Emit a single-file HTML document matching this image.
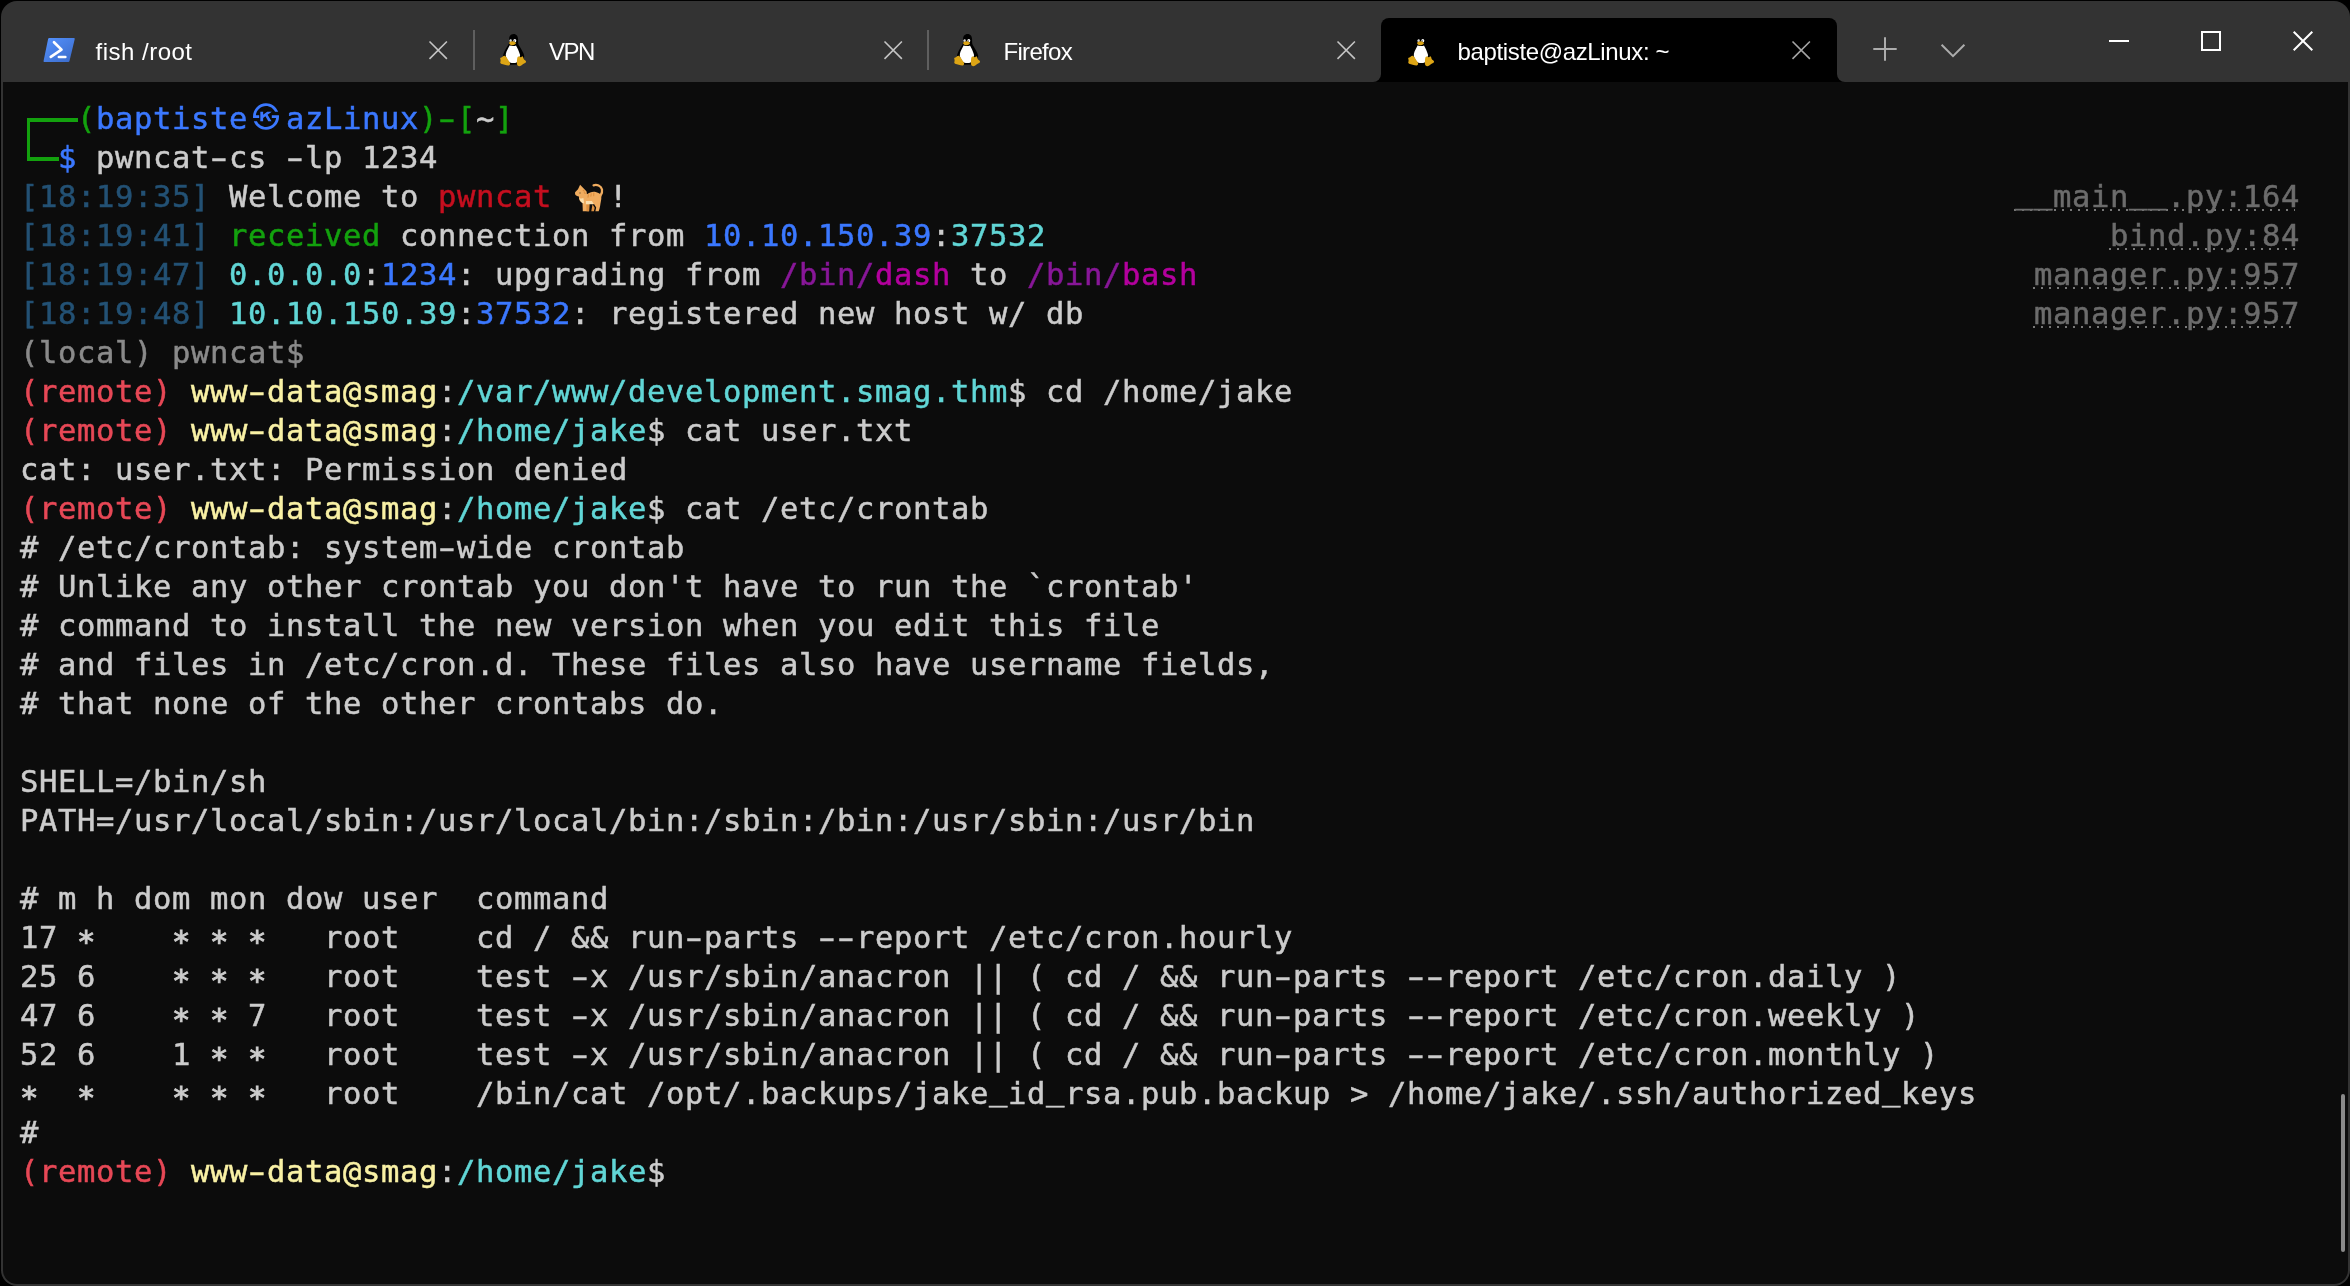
<!DOCTYPE html>
<html lang="en">
<head>
<meta charset="utf-8">
<title>baptiste@azLinux: ~</title>
<style>
*{box-sizing:border-box}
html,body{margin:0;padding:0;background:#000;width:2350px;height:1286px;overflow:hidden}
#win{position:absolute;left:1px;top:1px;width:2349px;height:1285px;background:#333;border-radius:16px;overflow:hidden}
#o{position:absolute;left:-1px;top:-1px;width:2350px;height:1286px}
#term{position:absolute;left:3px;top:82px;width:2345px;height:1202px;background:#0c0c0c;border-radius:0 0 14px 14px}
#tabs{will-change:transform;position:absolute;left:0;top:0;width:2350px;height:82px;font-family:"Liberation Sans","DejaVu Sans",sans-serif;font-size:24px;color:#fff}
.tt{position:absolute;top:37px;line-height:30px;height:30px;white-space:pre;color:#fff}
.sep{position:absolute;top:30px;width:2px;height:40px;background:#5f5f5f}
#atab{position:absolute;left:1381px;top:18px;width:456px;height:64px;background:#000;border-radius:8px 8px 0 0}
.fl{position:absolute;top:74px;width:8px;height:8px;overflow:hidden}
.fl i{position:absolute;width:16px;height:16px;border-radius:8px;box-shadow:0 0 0 8px #000}
svg{position:absolute;overflow:visible}
#scr{position:absolute;left:2341px;top:1094px;width:4px;height:158px;border-radius:2px;background:#8a8a8a}
#tx{will-change:transform;position:absolute;left:19.5px;top:99px;width:2280px;font-family:"DejaVu Sans Mono","Liberation Mono",monospace;font-size:30.5px;letter-spacing:0.6374px;color:#ccc;font-variant-ligatures:none;-webkit-text-stroke-width:0.5px}
#tx div{height:39px;line-height:39px;position:relative;white-space:pre}
.g{color:#13a10e}.bb{color:#3b78ff}.w{color:#ccc}.ts{color:#235174}.r{color:#c50f1f}
.bc{color:#61d6d6}.p{color:#881798}.m{color:#b4009e}.br{color:#e74856}.by{color:#f9f1a5}
.dm{color:#8a8a8a}
.cat{display:inline-block;width:38px;height:1px;position:relative;vertical-align:baseline}
.a{font-weight:inherit;position:relative;top:4px;-webkit-text-stroke-width:1px}
.h{font-weight:inherit;display:inline-block;transform:scaleX(1.6)}
.u{font-weight:inherit;position:relative;top:-4.5px}
.hid{color:transparent;-webkit-text-stroke-width:0}
.bx{position:absolute;background:#13a10e;z-index:2}
.k{display:inline-block;width:38px;height:39px;vertical-align:top;text-align:center;letter-spacing:0;font-family:"Noto Sans CJK KR","Noto Sans CJK JP","Noto Sans CJK SC",sans-serif;font-size:27.5px;line-height:39px;-webkit-text-stroke-width:0;position:relative;top:-3px;left:-1px}
.rt{position:absolute;top:0;right:0;height:39px;padding-left:1px;color:#6c6c6c;background:linear-gradient(#0c0c0c,#0c0c0c) right 32px/5px 2px no-repeat,linear-gradient(90deg,#787878 2px,transparent 2px) 0 32px/8px 2px repeat-x}
.rt u{text-decoration:none;border-bottom:0}
</style>
</head>
<body>
<div id="win"><div id="o">
<div id="term"></div>
<div id="tabs">
<svg style="left:43px;top:37px" width="33" height="26" viewBox="43 37 33 26"><defs><linearGradient id="psg" x1="0" y1="0" x2="1" y2="1"><stop offset="0" stop-color="#5593ff"/><stop offset="1" stop-color="#3a6ac8"/></linearGradient></defs><path d="M49.300 38h24.400a1 1 0 0 1 1 1.300l-5.200 21.700a1.300 1.300 0 0 1-1.200 1H44.600a1 1 0 0 1-1-1.300l4.500-21.700a1.300 1.300 0 0 1 1.200-1z" fill="url(#psg)"/><path d="M54 42.300l7.500 7.300-10.700 7.300" stroke="#fff" stroke-width="2.700" stroke-linecap="round" stroke-linejoin="round" fill="none"/><path d="M58.800 57.100h6.600" stroke="#fff" stroke-width="2.500" stroke-linecap="round" fill="none"/></svg>
<span class="tt" style="left:95.5px;letter-spacing:0.5px">fish /root</span>
<svg style="left:429.3px;top:40.9px" width="18.4" height="18.4" viewBox="0 0 18.4 18.4"><path d="M0.500 0.500L17.9 17.9M17.9 0.500L0.500 17.9" stroke="#c4c4c4" stroke-width="1.6" fill="none"/></svg>
<div class="sep" style="left:473px"></div>
<svg class="tux" style="left:499.9px;top:33.6px" width="26.2" height="32.4" viewBox="0 0 26.2 32.4"><path d="M13.6 0C10.6 0 9 2.4 9.1 5.4c.1 2.2.3 3.6-.9 5.6-1.5 2.4-3.6 5.6-4.6 8.6-.6 1.8-.9 3.6-.3 4.6l5 6.6 10.500-.2 4.800-6.400c1.200-1.400.500-3.300-.300-5.200-1.200-2.900-3-5.600-4.400-7.800-1-1.700-.7-3.600-.800-5.800C18 2.300 16.600 0 13.600 0z" fill="#000"/><path d="M9.800 11.200c-1.400 2.600-3.300 5.600-3.900 8.600-.5 2.600.7 5.200 2.300 7.200 1.400 1.700 3.500 2.200 5.500 2.100 2.100-.1 3.900-.8 4.700-2.900.5-1.400.6-3 1.600-3.600.4-.2.100-1.700-.300-2.900-.800-2.900-2.300-5.800-3.700-8.300-1 .9-4.900 1-6.200-.2z" fill="#fff"/><ellipse cx="10.700" cy="6.700" rx="1.300" ry="1.500" fill="#fff"/><ellipse cx="14.800" cy="6.700" rx="1.500" ry="1.600" fill="#fff"/><circle cx="11.100" cy="7" r=".6" fill="#000"/><circle cx="14.400" cy="7" r=".6" fill="#000"/><path d="M9.100 8.900c.2-.9 2.100-1.700 3.400-1.700 1.400 0 3.300 1 3.500 1.700.2.700-1.900 2.300-3.600 2.400-1.600.1-3.500-1.500-3.300-2.400z" fill="#dda515"/><path d="M.3 25c-.6-1.300.8-1.400 1.700-1.800.9-.5 1.300-1.700 2.600-1.500 1.300.2 2.200 2 3.100 3.500 1 1.700 2.700 3.300 2.400 4.700-.3 1.500-2 1.800-3.500 1.400-1.900-.5-3.900-1-5.500-1.600-1.500-.6-.5-1.900-.5-2.900 0-.7-.1-1.300-.300-1.800z" fill="#dda515"/><path d="M17.500 23.300c.5-1 1.300-.700 2.200-.600 1 .1 2.100-.600 2.900-.200.900.5.700 1.700 1.100 2.500.5 1 2.500 1.700 2.400 2.700-.1 1-1.700 1.400-2.900 2.200-1.300.9-2.600 2.400-4.200 2.300-1.500-.1-2.100-1.500-2.100-2.900 0-2 .1-4.700.600-6z" fill="#dda515"/><circle cx="20.800" cy="22.300" r="1" fill="#000"/></svg>
<span class="tt" style="left:549px;letter-spacing:-1.5px">VPN</span>
<svg style="left:883.5px;top:40.9px" width="18.4" height="18.4" viewBox="0 0 18.4 18.4"><path d="M0.500 0.500L17.9 17.9M17.9 0.500L0.500 17.9" stroke="#c4c4c4" stroke-width="1.6" fill="none"/></svg>
<div class="sep" style="left:927px"></div>
<svg class="tux" style="left:953.9px;top:33.6px" width="26.2" height="32.4" viewBox="0 0 26.2 32.4"><path d="M13.6 0C10.6 0 9 2.4 9.1 5.4c.1 2.2.3 3.6-.9 5.6-1.5 2.4-3.6 5.6-4.6 8.6-.6 1.8-.9 3.6-.3 4.6l5 6.6 10.500-.2 4.800-6.400c1.200-1.400.500-3.300-.300-5.200-1.200-2.900-3-5.600-4.400-7.800-1-1.700-.7-3.600-.800-5.800C18 2.300 16.600 0 13.600 0z" fill="#000"/><path d="M9.800 11.200c-1.400 2.600-3.300 5.600-3.900 8.600-.5 2.600.7 5.200 2.300 7.200 1.400 1.700 3.500 2.200 5.500 2.100 2.100-.1 3.900-.8 4.700-2.900.5-1.400.6-3 1.600-3.600.4-.2.100-1.700-.300-2.900-.800-2.900-2.300-5.800-3.700-8.300-1 .9-4.900 1-6.200-.2z" fill="#fff"/><ellipse cx="10.700" cy="6.700" rx="1.300" ry="1.500" fill="#fff"/><ellipse cx="14.800" cy="6.700" rx="1.500" ry="1.600" fill="#fff"/><circle cx="11.100" cy="7" r=".6" fill="#000"/><circle cx="14.400" cy="7" r=".6" fill="#000"/><path d="M9.100 8.900c.2-.9 2.100-1.700 3.400-1.700 1.400 0 3.300 1 3.500 1.700.2.700-1.900 2.300-3.600 2.400-1.600.1-3.500-1.500-3.300-2.400z" fill="#dda515"/><path d="M.3 25c-.6-1.300.8-1.400 1.700-1.800.9-.5 1.300-1.700 2.600-1.500 1.300.2 2.200 2 3.100 3.500 1 1.700 2.700 3.300 2.400 4.700-.3 1.500-2 1.800-3.500 1.400-1.900-.5-3.900-1-5.500-1.600-1.500-.6-.5-1.900-.5-2.900 0-.7-.1-1.300-.300-1.800z" fill="#dda515"/><path d="M17.500 23.300c.5-1 1.300-.700 2.200-.600 1 .1 2.100-.600 2.900-.200.900.5.700 1.700 1.100 2.500.5 1 2.500 1.700 2.400 2.700-.1 1-1.700 1.400-2.900 2.200-1.300.9-2.600 2.400-4.200 2.300-1.500-.1-2.100-1.500-2.100-2.900 0-2 .1-4.700.600-6z" fill="#dda515"/><circle cx="20.800" cy="22.300" r="1" fill="#000"/></svg>
<span class="tt" style="left:1003.5px;letter-spacing:-0.7px">Firefox</span>
<svg style="left:1337.3px;top:40.9px" width="18.4" height="18.4" viewBox="0 0 18.4 18.4"><path d="M0.500 0.500L17.9 17.9M17.9 0.500L0.500 17.9" stroke="#c4c4c4" stroke-width="1.6" fill="none"/></svg>
<div id="atab"></div>
<div class="fl" style="left:1373px"><i style="left:-8px;top:-8px"></i></div>
<div class="fl" style="left:1837px"><i style="left:0;top:-8px"></i></div>
<svg class="tux" style="left:1407.8px;top:33.6px" width="26.2" height="32.4" viewBox="0 0 26.2 32.4"><path d="M13.6 0C10.6 0 9 2.4 9.1 5.4c.1 2.2.3 3.6-.9 5.6-1.5 2.4-3.6 5.6-4.6 8.6-.6 1.8-.9 3.6-.3 4.6l5 6.6 10.500-.2 4.800-6.400c1.200-1.400.500-3.300-.300-5.200-1.200-2.900-3-5.600-4.400-7.800-1-1.700-.7-3.600-.800-5.800C18 2.300 16.600 0 13.600 0z" fill="#000"/><path d="M9.800 11.200c-1.400 2.600-3.300 5.600-3.900 8.600-.5 2.600.7 5.200 2.300 7.200 1.400 1.700 3.500 2.200 5.500 2.100 2.100-.1 3.900-.8 4.700-2.900.5-1.400.6-3 1.600-3.600.4-.2.100-1.700-.300-2.900-.800-2.900-2.300-5.800-3.700-8.300-1 .9-4.900 1-6.200-.2z" fill="#fff"/><ellipse cx="10.700" cy="6.700" rx="1.300" ry="1.500" fill="#fff"/><ellipse cx="14.800" cy="6.700" rx="1.500" ry="1.600" fill="#fff"/><circle cx="11.100" cy="7" r=".6" fill="#000"/><circle cx="14.400" cy="7" r=".6" fill="#000"/><path d="M9.100 8.900c.2-.9 2.100-1.700 3.400-1.700 1.400 0 3.300 1 3.500 1.700.2.700-1.900 2.300-3.600 2.400-1.600.1-3.500-1.500-3.300-2.400z" fill="#dda515"/><path d="M.3 25c-.6-1.300.8-1.400 1.700-1.800.9-.5 1.300-1.700 2.600-1.500 1.300.2 2.200 2 3.100 3.500 1 1.700 2.700 3.300 2.400 4.700-.3 1.500-2 1.800-3.500 1.400-1.900-.5-3.900-1-5.500-1.600-1.500-.6-.5-1.900-.5-2.900 0-.7-.1-1.300-.300-1.800z" fill="#dda515"/><path d="M17.500 23.300c.5-1 1.300-.700 2.200-.600 1 .1 2.100-.600 2.900-.200.900.5.700 1.700 1.100 2.500.5 1 2.500 1.700 2.400 2.700-.1 1-1.700 1.400-2.900 2.200-1.300.9-2.600 2.400-4.200 2.300-1.500-.1-2.100-1.500-2.100-2.900 0-2 .1-4.700.600-6z" fill="#dda515"/><circle cx="20.800" cy="22.300" r="1" fill="#000"/></svg>
<span class="tt" style="left:1457.5px;letter-spacing:-0.36px">baptiste@azLinux: ~</span>
<svg style="left:1791.6px;top:40.9px" width="18.4" height="18.4" viewBox="0 0 18.4 18.4"><path d="M0.500 0.500L17.9 17.9M17.9 0.500L0.500 17.9" stroke="#a4a4a4" stroke-width="1.6" fill="none"/></svg>
<svg style="left:1873px;top:37px" width="24" height="24" viewBox="0 0 24 24"><path d="M12 0.300v23.400M0.300 12h23.400" stroke="#adadad" stroke-width="2" fill="none"/></svg>
<svg style="left:1941px;top:43.700px" width="24" height="14" viewBox="0 0 24 14"><path d="M0.600 0.800L12 12.200 23.400 0.800" stroke="#adadad" stroke-width="2" fill="none"/></svg>
<div style="position:absolute;left:2109px;top:40px;width:20px;height:2px;background:#fff"></div>
<div style="position:absolute;left:2201px;top:31px;width:20px;height:20px;border:2px solid #fff"></div>
<svg style="left:2293px;top:31px" width="20" height="20" viewBox="0 0 20 20"><path d="M0.700 0.700L19.300 19.300M19.300 0.700L0.700 19.300" stroke="#fff" stroke-width="2" fill="none"/></svg>
</div>
<div id="scr"></div>
<div id="tx">
<div><i class="bx" style="left:7px;top:19px;width:3px;height:43px"></i><i class="bx" style="left:7px;top:19px;width:51px;height:4px"></i><i class="bx" style="left:7px;top:58px;width:32px;height:4px"></i><span class="hid">┌──</span><span class="g">(</span><span class="bb">baptiste<span class="k">㉿</span>azLinux</span><span class="g">)<b class="h">-</b>[</span><span class="w">~</span><span class="g">]</span></div>
<div><span class="hid">└─</span><span class="bb">$</span> pwncat<b class="h">-</b>cs <b class="h">-</b>lp 1234</div>
<div><span class="ts">[18:19:35]</span> Welcome to <span class="r">pwncat</span> <span class="cat"><svg style="left:4px;top:-21.700px" width="28.500" height="27.500" viewBox="0 0 28.500 27.500" role="img" aria-label="cat"><title>🐈</title><path d="M18.600 1.300c3-1 7.500.200 8.400 4.200.600 2.800-.700 5-1.600 6.300" stroke="#f0ac5f" stroke-width="2.300" stroke-linecap="round" fill="none"/><path d="M5.100.800l6.300 6.400c.500.800.300 2.200.600 3 2.500-2 6-2.900 8.700-2.200 3 .700 5.300 2.100 5.600 4.600.300 2.700-.800 6.400-1.200 9.400-.400 1.700-.800 3.600-1.400 5.200h-3.300l.800-3.600-2.200-3.500h-4.600l-.300 7.100h-6.300l-.300-8.200c-2.500-1-3.800-3.600-3.600-6.400-1.700-.300-3.100-1.100-3.800-2.400C.100 9.400-.200 8.600.300 8L3 5.200z" fill="#f0ac5f"/><path d="M11.300 20.200h3.100l-.300 7h-2.600zM17.500 20.200l2.200 3.500-.800 3.500h-2.600z" fill="#dd8f3e"/><path d="M4.300 13.900c1.400.700 3 .600 4.100.200l.700 5.400c-2.500-.400-4.500-2.600-4.800-5.600zM10.900 17h6l2 3.200h-8z" fill="#fbdfad"/><path d="M13 13.200l.400-2.300M15.900 12.300l.300-2.600M18.700 11.800l.100-2.800M8.200 6.300l1 .800M9.300 8.600l.900.900" stroke="#dd8f3e" stroke-width="1.100" stroke-linecap="round" fill="none"/><circle cx="5" cy="9" r=".8" fill="#8a6a3a"/></svg></span>!<span class="rt"><b class="u">_</b><b class="u">_</b>main<b class="u">_</b><b class="u">_</b>.py:164</span></div>
<div><span class="ts">[18:19:41]</span> <span class="g">received</span> connection from <span class="bb">10.10.150.39</span>:<span class="bc">37532</span><span class="rt">bind.py:84</span></div>
<div><span class="ts">[18:19:47]</span> <span class="bc">0.0.0.0</span>:<span class="bb">1234</span>: upgrading from <span class="p">/bin/</span><span class="m">dash</span> to <span class="p">/bin/</span><span class="m">bash</span><span class="rt">manager.py:957</span></div>
<div><span class="ts">[18:19:48]</span> <span class="bc">10.10.150.39</span>:<span class="bb">37532</span>: registered new host w/ db<span class="rt">manager.py:957</span></div>
<div><span class="dm">(local) pwncat$</span></div>
<div><span class="br">(remote)</span> <span class="by">www<b class="h">-</b>data@smag</span>:<span class="bc">/var/www/development.smag.thm</span>$ cd /home/jake</div>
<div><span class="br">(remote)</span> <span class="by">www<b class="h">-</b>data@smag</span>:<span class="bc">/home/jake</span>$ cat user.txt</div>
<div>cat: user.txt: Permission denied</div>
<div><span class="br">(remote)</span> <span class="by">www<b class="h">-</b>data@smag</span>:<span class="bc">/home/jake</span>$ cat /etc/crontab</div>
<div># /etc/crontab: system<b class="h">-</b>wide crontab</div>
<div># Unlike any other crontab you don't have to run the `crontab'</div>
<div># command to install the new version when you edit this file</div>
<div># and files in /etc/cron.d. These files also have username fields,</div>
<div># that none of the other crontabs do.</div>
<div> </div>
<div>SHELL=/bin/sh</div>
<div>PATH=/usr/local/sbin:/usr/local/bin:/sbin:/bin:/usr/sbin:/usr/bin</div>
<div> </div>
<div># m h dom mon dow user  command</div>
<div>17 <b class="a">*</b>    <b class="a">*</b> <b class="a">*</b> <b class="a">*</b>   root    cd / &amp;&amp; run<b class="h">-</b>parts <b class="h">-</b><b class="h">-</b>report /etc/cron.hourly</div>
<div>25 6    <b class="a">*</b> <b class="a">*</b> <b class="a">*</b>   root    test <b class="h">-</b>x /usr/sbin/anacron || ( cd / &amp;&amp; run<b class="h">-</b>parts <b class="h">-</b><b class="h">-</b>report /etc/cron.daily )</div>
<div>47 6    <b class="a">*</b> <b class="a">*</b> 7   root    test <b class="h">-</b>x /usr/sbin/anacron || ( cd / &amp;&amp; run<b class="h">-</b>parts <b class="h">-</b><b class="h">-</b>report /etc/cron.weekly )</div>
<div>52 6    1 <b class="a">*</b> <b class="a">*</b>   root    test <b class="h">-</b>x /usr/sbin/anacron || ( cd / &amp;&amp; run<b class="h">-</b>parts <b class="h">-</b><b class="h">-</b>report /etc/cron.monthly )</div>
<div><b class="a">*</b>  <b class="a">*</b>    <b class="a">*</b> <b class="a">*</b> <b class="a">*</b>   root    /bin/cat /opt/.backups/jake<b class="u">_</b>id<b class="u">_</b>rsa.pub.backup &gt; /home/jake/.ssh/authorized<b class="u">_</b>keys</div>
<div>#</div>
<div><span class="br">(remote)</span> <span class="by">www<b class="h">-</b>data@smag</span>:<span class="bc">/home/jake</span>$ </div>
</div>
</div></div>
</body>
</html>
